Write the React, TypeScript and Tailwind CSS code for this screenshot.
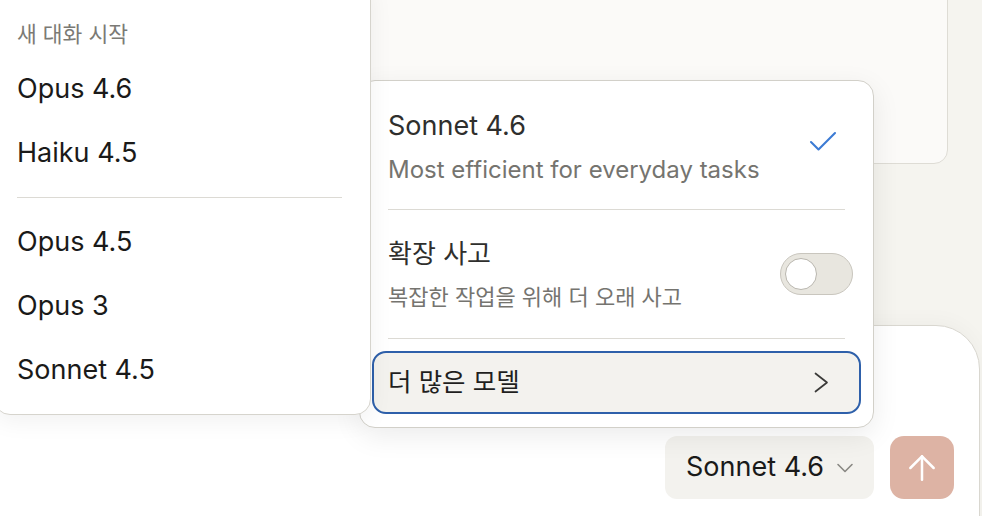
import { Check, ArrowUp } from "lucide-react";

const font = { fontFamily: '"Inter", "Noto Sans CJK KR", sans-serif' };

function LeftMenu() {
  return (
    <div className="absolute left-[-6px] top-[-20px] w-[377px] rounded-[16px] border border-[#d6d4cd] bg-white pb-[12px] pl-[22px] pr-[28px] pt-[38px] shadow-[0_6px_24px_rgba(0,0,0,0.06)]">
      <div className="text-[21.5px] leading-[30px] text-[#7b7a75]">새 대화 시작</div>
      <div className="mt-[8px] flex flex-col">
        <div className="h-[64px] text-[27px] leading-[64px] text-[#1a1a19]">Opus 4.6</div>
        <div className="h-[64px] text-[27px] leading-[64px] text-[#1a1a19]">Haiku 4.5</div>
      </div>
      <div className="my-[12px] h-px bg-[#dcdad4]" />
      <div className="flex flex-col">
        <div className="h-[64px] text-[27px] leading-[64px] text-[#1a1a19]">Opus 4.5</div>
        <div className="h-[64px] text-[27px] leading-[64px] text-[#1a1a19]">Opus 3</div>
        <div className="h-[64px] text-[27px] leading-[64px] text-[#1a1a19]">Sonnet 4.5</div>
      </div>
    </div>
  );
}

function RightMenu() {
  return (
    <div className="absolute left-[359px] top-[80px] w-[515px] rounded-[16px] border border-[#d2d0c9] bg-white px-[12px] pb-[13px] pt-[25px] shadow-[0_8px_28px_rgba(0,0,0,0.08)]">
      <div className="flex items-center justify-between px-[16px]">
        <div>
          <div className="text-[27px] leading-[40px] text-[#2f2f2d]">Sonnet 4.6</div>
          <div className="mt-[9px] text-[24px] leading-[30px] text-[#75746f]">Most efficient for everyday tasks</div>
        </div>
        <Check className="mb-[8px] mr-[4px] h-[36px] w-[36px] text-[#3c7bd4]" strokeWidth={1.4} />
      </div>
      <div className="mx-[16px] mt-[24px] h-px bg-[#dcdad4]" />
      <div className="flex items-center justify-between px-[16px] pt-[25px]">
        <div>
          <div className="text-[26px] leading-[38px] text-[#2f2f2d]">확장 사고</div>
          <div className="mt-[8px] text-[22px] leading-[32px] text-[#75746f]">복잡한 작업을 위해 더 오래 사고</div>
        </div>
        <div className="-mr-[8px] flex h-[42px] w-[73px] items-center rounded-full border border-[#c9c6be] bg-[#e8e6df] px-[4px]">
          <div className="h-[32px] w-[32px] rounded-full border border-[#b9b6ae] bg-white" />
        </div>
      </div>
      <div className="mx-[16px] mt-[25px] h-px bg-[#dcdad4]" />
      <div className="mt-[12px] flex h-[63px] items-center justify-between rounded-[14px] border-2 border-[#2e60aa] bg-[#f3f2ee] pl-[14px] pr-[30px]">
        <span className="text-[25.5px] text-[#1f1f1e]">더 많은 모델</span>
        <svg width="15" height="21" viewBox="0 0 15 21" fill="none" stroke="#3a3a38" strokeWidth="1.7" strokeLinecap="round" strokeLinejoin="round">
          <path d="M1.5 1.5 13 10.5 1.5 19.5" />
        </svg>
      </div>
    </div>
  );
}

export default function App() {
  return (
    <div className="relative h-[516px] w-[982px] overflow-hidden bg-[#f5f4ef]" style={font}>
      <div className="-mt-4 ml-[300px] mr-[34px] h-[180px] rounded-[14px] border border-[#dedcd5] bg-[#fbfaf8]" />
      <div className="ml-[-20px] mr-[2px] mt-[161px] h-[240px] rounded-[44px] border border-[#d9d7d0] bg-white shadow-[0_-4px_20px_rgba(0,0,0,0.03)]">
        <div className="flex justify-end gap-[16px] pr-[25px] pt-[110px]">
          <div className="flex h-[63px] items-center gap-[7px] rounded-[12px] bg-[#f3f2ee] pl-[21px] pr-[15px]">
            <span className="text-[27px] text-[#1a1a19]">Sonnet 4.6</span>
            <svg width="28" height="28" viewBox="0 0 24 24" fill="none" stroke="#8a8984" strokeWidth="1.4" strokeLinecap="round" strokeLinejoin="round">
              <path d="m6 9 6 6 6-6" />
            </svg>
          </div>
          <div className="flex h-[63px] w-[64px] items-center justify-center rounded-[14px] bg-[#ddb3a4]">
            <ArrowUp className="h-[40px] w-[40px] text-white" strokeWidth={1.5} />
          </div>
        </div>
      </div>
      <RightMenu />
      <LeftMenu />
    </div>
  );
}
